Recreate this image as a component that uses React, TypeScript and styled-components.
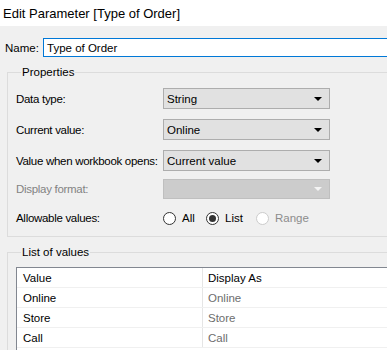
import React from "react";
import styled, { createGlobalStyle } from "styled-components";

const GlobalStyle = createGlobalStyle`
  html, body {
    margin: 0;
    padding: 0;
    background: #f0f0f0;
    overflow: hidden;
  }
  body {
    font-family: "Liberation Sans", Arial, sans-serif;
    font-size: 11.5px;
    color: #000;
  }
`;

const Window = styled.div`
  width: 440px;
  height: 350px;
  display: flex;
  flex-direction: column;
  background: #f0f0f0;
  overflow: hidden;
`;

const TitleBar = styled.div`
  height: 26px;
  background: #fff;
  display: flex;
  align-items: center;
  padding-left: 3px;
  font-size: 13px;
  color: #000;
  flex-shrink: 0;
`;

const Body = styled.div`
  display: flex;
  flex-direction: column;
  padding: 12px 0 0 5px;
`;

const NameRow = styled.div`
  display: flex;
  align-items: center;
`;

const NameLabel = styled.span`
  width: 38px;
`;

const NameInput = styled.div`
  flex: 1;
  height: 19px;
  border: 1px solid #0078d7;
  background: #fff;
  display: flex;
  align-items: center;
  padding-left: 3px;
  box-sizing: border-box;
`;

const Group = styled.fieldset<{ $top: number }>`
  margin: ${(p) => p.$top}px 0 0 2px;
  padding: 0 0 0 8px;
  border: 1px solid #dcdcdc;
  min-width: 0;
`;

const Legend = styled.legend`
  padding: 0 1px;
  margin-left: 5px;
  line-height: 16px;
  height: 16px;
`;

const PropGrid = styled.div`
  display: grid;
  grid-template-columns: 147px 167px;
  align-items: center;
  padding: 8px 0 9px 0;
`;

const Label = styled.span<{ $disabled?: boolean }>`
  white-space: nowrap;
  letter-spacing: -0.3px;
  color: ${(p) => (p.$disabled ? "#838383" : "#000")};
`;

const RowLabel = styled(Label)<{ $gap: number }>`
  margin-bottom: ${(p) => p.$gap}px;
`;

const Select = styled.div<{ $disabled?: boolean; $gap: number }>`
  height: ${(p) => (p.$disabled ? 20 : 21)}px;
  box-sizing: border-box;
  margin-bottom: ${(p) => p.$gap}px;
  border: 1px solid ${(p) => (p.$disabled ? "#bfbfbf" : "#adadad")};
  background: ${(p) => (p.$disabled ? "#cccccc" : "#e1e1e1")};
  display: flex;
  align-items: center;
  justify-content: space-between;
  padding: 0 7px 0 3px;
`;

const Arrow = styled.span<{ $disabled?: boolean }>`
  width: 0;
  height: 0;
  border-left: 4px solid transparent;
  border-right: 4px solid transparent;
  border-top: 4px solid ${(p) => (p.$disabled ? "#f4f4f4" : "#000")};
`;

const RadioGroup = styled.div`
  display: flex;
  align-items: center;
  height: 18px;
`;

const RadioItem = styled.label<{ $disabled?: boolean; $width: number }>`
  display: flex;
  align-items: center;
  width: ${(p) => p.$width}px;
  gap: 6px;
  color: ${(p) => (p.$disabled ? "#8c8c8c" : "#000")};
`;

const RadioCircle = styled.span<{ $checked?: boolean; $disabled?: boolean }>`
  width: 13px;
  height: 13px;
  box-sizing: border-box;
  border-radius: 50%;
  border: 1px solid ${(p) => (p.$disabled ? "#cccccc" : "#333")};
  background: #fff;
  display: flex;
  align-items: center;
  justify-content: center;
  flex-shrink: 0;

  &::after {
    content: "";
    display: ${(p) => (p.$checked ? "block" : "none")};
    width: 7px;
    height: 7px;
    border-radius: 50%;
    background: #333;
  }
`;

const ListBox = styled.div`
  margin-top: 7px;
  border: 1px solid #828790;
  border-right: none;
  border-bottom: none;
  background: #fff;
  height: 100px;
`;

const Row = styled.div`
  display: grid;
  grid-template-columns: 186px 1fr;
  height: 20px;
  box-sizing: border-box;
  border-bottom: 1px solid #f0f0f0;
`;

const Cell = styled.div<{ $muted?: boolean; $first?: boolean }>`
  display: flex;
  align-items: center;
  padding-left: ${(p) => (p.$first ? 6 : 5)}px;
  border-right: ${(p) => (p.$first ? "1px solid #e5e5e5" : "none")};
  color: ${(p) => (p.$muted ? "#6d6d6d" : "#000")};
`;

const values = ["Online", "Store", "Call"];

export default function App() {
  return (
    <Window>
      <GlobalStyle />
      <TitleBar>Edit Parameter [Type of Order]</TitleBar>
      <Body>
        <NameRow>
          <NameLabel>Name:</NameLabel>
          <NameInput>Type of Order</NameInput>
        </NameRow>

        <Group $top={7}>
          <Legend>Properties</Legend>
          <PropGrid>
            <RowLabel $gap={10}>Data type:</RowLabel>
            <Select $gap={10}>
              String <Arrow />
            </Select>
            <RowLabel $gap={10}>Current value:</RowLabel>
            <Select $gap={10}>
              Online <Arrow />
            </Select>
            <RowLabel $gap={8}>Value when workbook opens:</RowLabel>
            <Select $gap={8}>
              Current value <Arrow />
            </Select>
            <RowLabel $gap={10} $disabled>
              Display format:
            </RowLabel>
            <Select $gap={10} $disabled>
              <span />
              <Arrow $disabled />
            </Select>
            <Label>Allowable values:</Label>
            <RadioGroup>
              <RadioItem $width={43}>
                <RadioCircle />
                All
              </RadioItem>
              <RadioItem $width={50}>
                <RadioCircle $checked />
                List
              </RadioItem>
              <RadioItem $width={60} $disabled>
                <RadioCircle $disabled />
                Range
              </RadioItem>
            </RadioGroup>
          </PropGrid>
        </Group>

        <Group $top={7}>
          <Legend>List of values</Legend>
          <ListBox>
            <Row>
              <Cell $first>Value</Cell>
              <Cell>Display As</Cell>
            </Row>
            {values.map((v) => (
              <Row key={v}>
                <Cell $first>{v}</Cell>
                <Cell $muted>{v}</Cell>
              </Row>
            ))}
          </ListBox>
        </Group>
      </Body>
    </Window>
  );
}
